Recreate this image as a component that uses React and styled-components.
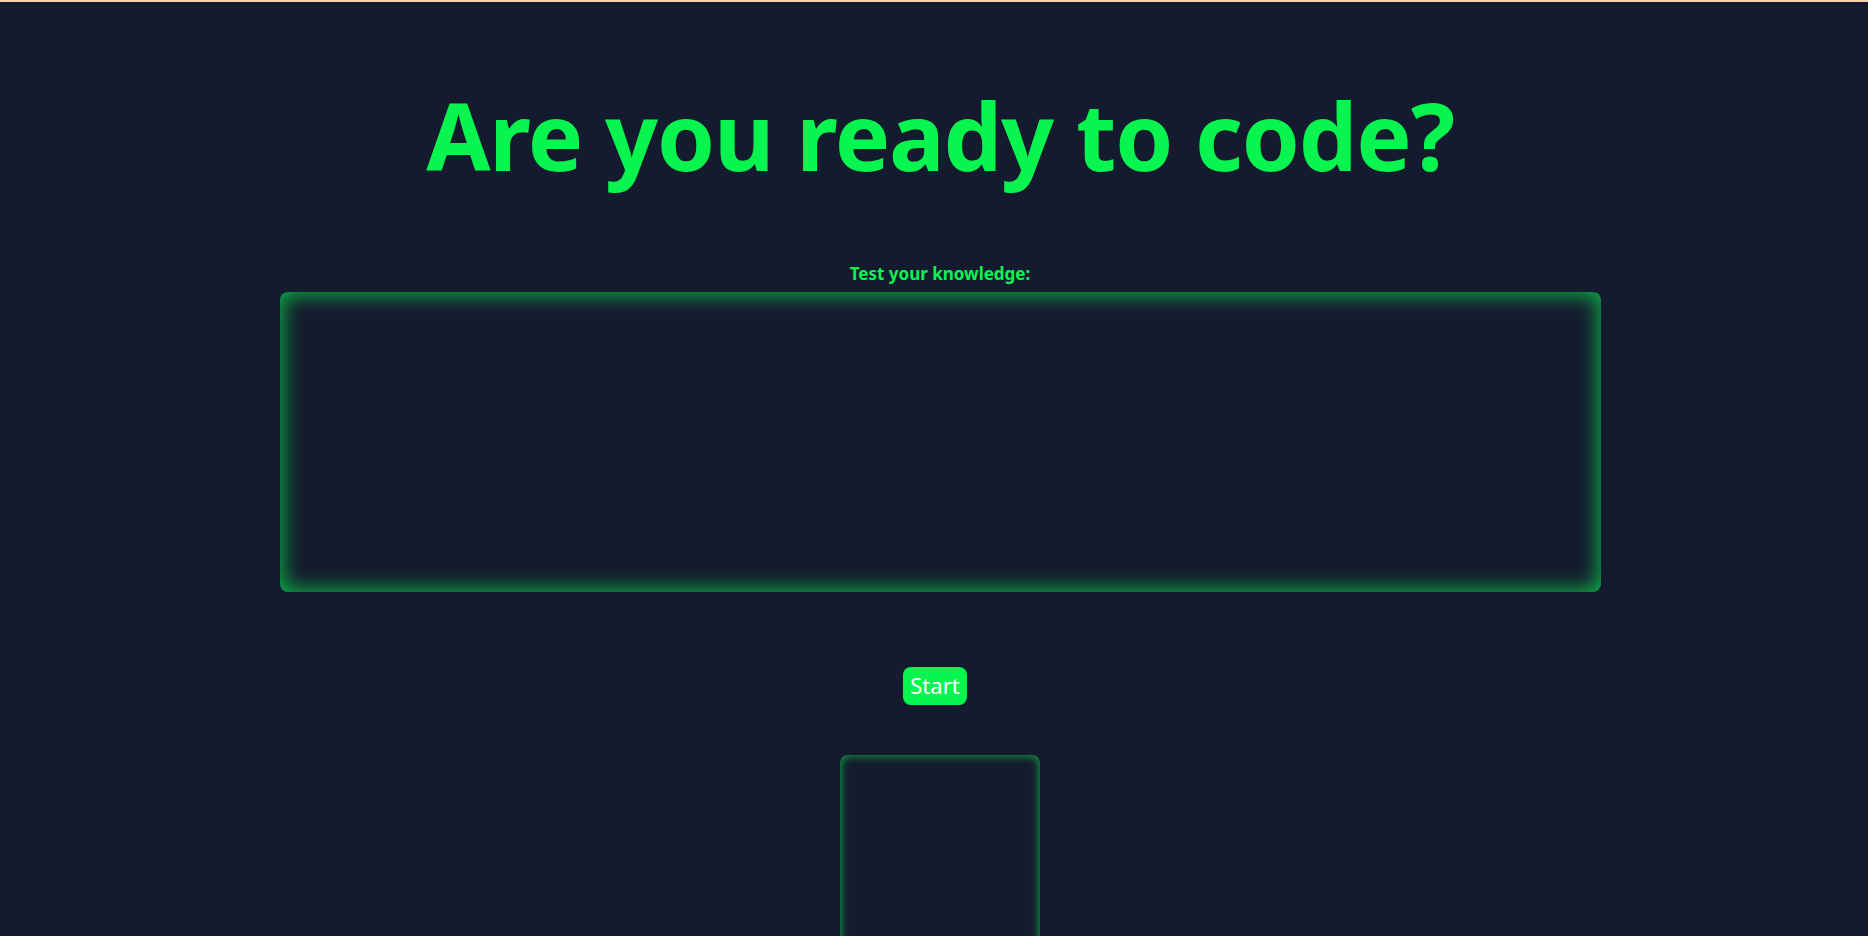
import styled, { createGlobalStyle } from 'styled-components'

const GlobalStyle = createGlobalStyle`
  html, body {
    margin: 0;
    padding: 0;
    background-color: #151b2e;
    font-family: "Noto Sans", "Open Sans", sans-serif;
  }
  body {
    border-top: 2px solid #f6d3a8;
    overflow: hidden;
  }
`

const Page = styled.main`
  display: flex;
  flex-direction: column;
  align-items: center;
  padding: 78px 0 0 12px;
  min-height: 934px;
  box-sizing: border-box;
`

const Title = styled.h1`
  margin: 0;
  color: #08f54f;
  font-size: 93px;
  font-weight: 700;
  line-height: 1.2;
  letter-spacing: -1.2px;
`

const Label = styled.label`
  margin-top: 72px;
  color: #08f54f;
  font-size: 17px;
  font-weight: 700;
  line-height: 20px;
`

const Panel = styled.div`
  width: ${p => p.$width}px;
  height: ${p => p.$height}px;
  margin-top: ${p => p.$top}px;
  border-radius: 8px;
  background-color: #151b2e;
  box-shadow: inset 0 0 ${p => p.$glow}px ${p => p.$spread}px rgba(10, 235, 80, ${p => p.$alpha});
  box-sizing: border-box;
  flex-shrink: 0;
`

const StartButton = styled.button`
  margin-top: 75px;
  margin-left: -10px;
  padding: 3px 7px 5px;
  border: none;
  border-radius: 8px;
  background-color: #08f54f;
  color: #ffffff;
  font-family: "Noto Sans", "Open Sans", sans-serif;
  font-size: 22px;
  line-height: 30px;
  cursor: pointer;
`

export default function App() {
  return (
    <>
      <GlobalStyle />
      <Page>
        <Title>Are you ready to code?</Title>
        <Label>Test your knowledge:</Label>
        <Panel $width={1321} $height={300} $top={8} $glow={20} $spread={3} $alpha={0.72} />
        <StartButton>Start</StartButton>
        <Panel $width={200} $height={300} $top={50} $glow={9} $spread={1} $alpha={0.65} />
      </Page>
    </>
  )
}
